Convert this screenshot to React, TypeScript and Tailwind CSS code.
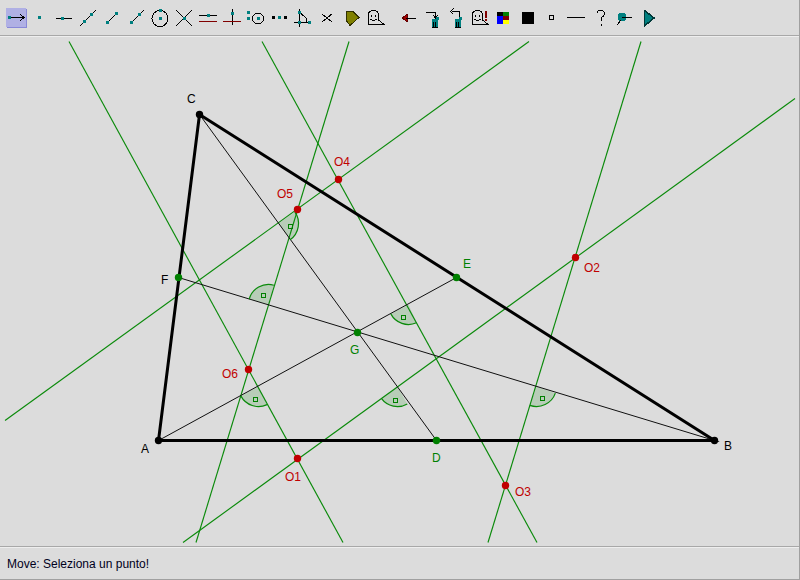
import React from "react";

const T = "#008080";
const Sq = ({ x, y, s = 3, c = T }: { x: number; y: number; s?: number; c?: string }) => (
  <rect x={x} y={y} width={s} height={s} fill={c} />
);
const L = ({ d, c = "#000", w = 1 }: { d: string; c?: string; w?: number }) => (
  <path d={d} stroke={c} strokeWidth={w} fill="none" />
);
const Can = ({ x, y }: { x: number; y: number }) => (
  <g>
    <rect x={x} y={y} width={6} height={8} fill={T} />
    <rect x={x + 4} y={y - 2} width={3} height={3} fill={T} />
    <rect x={x + 1} y={y + 3} width={1} height={5} fill="#000" />
    <rect x={x + 3} y={y + 3} width={1} height={5} fill="#000" />
    <rect x={x} y={y + 8} width={6} height={1} fill="#000" />
  </g>
);
const Ghost = () => (
  <g>
    <path d="M4.5 18.5V9Q4.5 4.5 9 4.5H10Q14.5 4.5 14.5 9V14L20 18.5Z" fill="none" stroke="#000" />
    <rect x={7} y={9} width={1} height={2} fill="#000" />
    <rect x={11} y={9} width={1} height={2} fill="#000" />
    <path d="M6.5 13Q9.5 16 12.5 13" fill="none" stroke="#000" />
  </g>
);

const icons: React.ReactNode[] = [
  <g key="0">
    <rect x={3} y={3} width={20} height={19} fill="#8888d8" />
    <rect x={2} y={2} width={20} height={19} fill="#b0b0e4" />
    <Sq x={4} y={10} />
    <L d="M7 11.5H20M16 8L20 11.5L16 15" />
  </g>,
  <g key="1"><Sq x={10} y={10} /></g>,
  <g key="2"><L d="M4 12.5H20" /><Sq x={9} y={11} /></g>,
  <g key="3"><L d="M4 20L20 4" /><Sq x={7} y={14} /><Sq x={14} y={7} /></g>,
  <g key="4"><L d="M7 17L17 7" /><Sq x={6} y={15} /><Sq x={15} y={6} /></g>,
  <g key="5"><L d="M7 17L20 4" /><Sq x={6} y={15} /><Sq x={14} y={7} /></g>,
  <g key="6"><circle cx={12} cy={12.5} r={8} fill="none" stroke="#000" /><Sq x={11} y={11} /><Sq x={11} y={3} /></g>,
  <g key="7"><L d="M4 4L20 20M20 4L4 20" /><Sq x={10.5} y={10.5} /></g>,
  <g key="8"><L d="M3 9.5H21" /><L d="M3 15.5H21" c="#800000" /><Sq x={10.5} y={8} /></g>,
  <g key="9"><L d="M12.5 3V19" /><L d="M3 15.5H21" c="#800000" /><Sq x={11} y={6} /></g>,
  <g key="10"><Sq x={3} y={5} /><Sq x={3} y={11} /><circle cx={14} cy={12.5} r={5.5} fill="none" stroke="#000" /><Sq x={13} y={11} /></g>,
  <g key="11"><Sq x={4} y={10} c="#000" /><Sq x={10} y={10} /><Sq x={16} y={10} c="#000" /></g>,
  <g key="12">
    <L d="M7.5 3V21M2 16.5H17" />
    <path d="M8 7L12 10Q15 12 15 16" fill="none" stroke="#000" />
    <Sq x={6} y={5} /><Sq x={6} y={15} /><Sq x={16} y={15} />
  </g>,
  <g key="13"><L d="M6 8Q10 11 11 12Q12 11 16 8M6 16Q10 13 11 12Q12 13 16 16" /></g>,
  <g key="14"><path d="M6.5 5.5H13L19 11.5L10 19.5L6.5 15Z" fill="#808000" stroke="#303000" /></g>,
  <g key="15"><Ghost /></g>,
  <g key="16"><path d="M6 12L11 8.5V15.5Z" fill="#a00000" stroke="#600000" /><L d="M10 12.5H20" /></g>,
  <g key="17"><L d="M6 6.5H15.5V11" /><L d="M13 9L15.5 12L18 9" /><Can x={12} y={13} /></g>,
  <g key="18"><L d="M8 5.5H15.5V11" /><L d="M9.5 2.5L6.5 5.5L9.5 8.5" /><Can x={11} y={13} /></g>,
  <g key="19"><Ghost /><rect x={17} y={5} width={2} height={7} fill="#800000" /><rect x={17} y={13} width={2} height={2} fill="#800000" /></g>,
  <g key="20">
    <rect x={5} y={6} width={6} height={4} fill="#000" /><rect x={11} y={6} width={6} height={4} fill="#008000" />
    <rect x={5} y={10} width={6} height={4} fill="#0000ff" /><rect x={11} y={10} width={6} height={4} fill="#800000" />
    <rect x={5} y={14} width={6} height={4} fill="#0000ff" /><rect x={11} y={14} width={6} height={4} fill="#ffff00" />
  </g>,
  <g key="21"><rect x={6} y={6} width={12} height={12} fill="#000" /></g>,
  <g key="22"><rect x={9.5} y={9.5} width={4} height={4} fill="none" stroke="#000" /></g>,
  <g key="23"><L d="M3 11.5H21" /></g>,
  <g key="24"><path d="M9 7Q9 4.5 13 4.5Q16.5 4.5 16.5 7.5Q16.5 10 13.5 11.5Q13 12 13 15" fill="none" stroke="#000" /><rect x={13} y={18} width={1} height={2} fill="#000" /></g>,
  <g key="25"><circle cx={10} cy={11} r={4.5} fill={T} /><L d="M10 11.5H20M5 19L9 14" /></g>,
  <g key="26"><path d="M8.5 4.5L18 12L8.5 20Z" fill={T} stroke="#003838" strokeWidth={1.5} /></g>,
];

const green = "#0a8a0a";
const greenLines: [number, number, number, number][] = [
  [68.5, 41, 342.5, 542],
  [261.5, 41, 536.5, 542],
  [348.5, 41, 195.5, 542],
  [640.5, 41, 487.5, 542],
  [528.5, 41, 4.5, 420],
  [794.5, 98, 182.5, 542],
];

// vertex, first end, second end, right-angle marker
const sectors: number[][] = [
  [278, 223, 295, 211, 288, 237, 290, 226],
  [268, 304, 250, 299, 273, 286, 263, 295],
  [408, 304, 391, 313, 415, 320, 403, 317],
  [397, 386, 382, 397, 406, 402, 395, 400],
  [536, 386, 530, 403, 553, 392, 542, 398],
  [258, 386, 241, 395, 266, 403, 255, 399],
];
const R = 20;
function sector([vx, vy, ax, ay, bx, by]: number[]) {
  const ua = Math.hypot(ax - vx, ay - vy);
  const ub = Math.hypot(bx - vx, by - vy);
  const px = vx + ((ax - vx) / ua) * R;
  const py = vy + ((ay - vy) / ua) * R;
  const qx = vx + ((bx - vx) / ub) * R;
  const qy = vy + ((by - vy) / ub) * R;
  const sweep = (ax - vx) * (by - vy) - (ay - vy) * (bx - vx) > 0 ? 1 : 0;
  const arc = `M${px} ${py}A${R} ${R} 0 0 ${sweep} ${qx} ${qy}`;
  return { arc, fill: `M${vx} ${vy}L${px} ${py}A${R} ${R} 0 0 ${sweep} ${qx} ${qy}Z` };
}

const pts: [number, number, string][] = [
  [158, 440, "#000"], [714, 440, "#000"], [199, 114, "#000"],
  [436, 440, "#008000"], [456, 277, "#008000"], [178, 277, "#008000"], [357, 332, "#008000"],
  [297, 458, "#c00000"], [575, 257, "#c00000"], [505, 485, "#c00000"],
  [338, 179, "#c00000"], [297, 209, "#c00000"], [248, 369, "#c00000"],
];
const labels: [string, number, number, string][] = [
  ["C", 186.5, 102, "#000"], ["A", 140.5, 452, "#000"], ["B", 723.5, 449, "#000"],
  ["D", 431.5, 461, "#008000"], ["E", 462.5, 267, "#008000"], ["F", 160.5, 283, "#000"], ["G", 349.5, 353, "#008000"],
  ["O1", 284.5, 480, "#c00000"], ["O2", 583.5, 271, "#c00000"], ["O3", 514.5, 495, "#c00000"],
  ["O4", 333.5, 165, "#c00000"], ["O5", 276.5, 197, "#c00000"], ["O6", 221.5, 377, "#c00000"],
];

export default function App() {
  return (
    <div className="w-[800px] h-[580px] flex flex-col bg-[#dcdcdc] border-r border-[#a0a0a0] overflow-hidden font-['Liberation_Sans',Arial,sans-serif]">
      <div className="h-[37px] shrink-0 border-b border-[#eeeeee]">
        <div className="h-[36px] flex pl-1 pt-[6px] border-b border-[#a8a8a8]">
          {icons.map((ic, i) => (
            <svg key={i} width={24} height={24} viewBox="0 0 24 24" shapeRendering="crispEdges" className={i === 16 ? "ml-2 shrink-0" : "shrink-0"}>
              {ic}
            </svg>
          ))}
        </div>
      </div>
      <svg viewBox="-0.5 36.5 799 509" className="w-[799px] h-[509px] shrink-0 block">
        {sectors.map((s, i) => {
          const g = sector(s);
          return <path key={i} d={g.fill} fill="#008000" fillOpacity={0.16} />;
        })}
        {greenLines.map(([a, b, c, d], i) => (
          <line key={i} x1={a} y1={b} x2={c} y2={d} stroke={green} strokeWidth={1.15} />
        ))}
        <g stroke="#101010" strokeWidth={1}>
          <line x1={199} y1={114} x2={436} y2={440} />
          <line x1={158} y1={440} x2={456} y2={277} />
          <line x1={178} y1={277} x2={714} y2={440} />
        </g>
        <polygon points="158,440 714,440 199,114" fill="none" stroke="#000" strokeWidth={3} />
        {sectors.map((s, i) => {
          const g = sector(s);
          return (
            <g key={i}>
              <path d={g.arc} fill="none" stroke={green} strokeWidth={1.2} />
              <rect x={s[6] - 2} y={s[7] - 2} width={4} height={4} fill="none" stroke="#008000" strokeWidth={1} shapeRendering="crispEdges" />
            </g>
          );
        })}
        {pts.map(([x, y, c], i) => (
          <circle key={i} cx={x} cy={y} r={3.7} fill={c} />
        ))}
        {labels.map(([t, x, y, c]) => (
          <text key={t} x={x} y={y} fill={c} fontSize={12} fontFamily="'Liberation Sans', Arial, sans-serif">{t}</text>
        ))}
      </svg>
      <div className="flex-1 border-t border-t-[#a8a8a8] border-b border-b-[#a0a0a0]">
        <div className="h-full border-t border-t-[#eeeeee] pl-[7px] pt-[9px] text-xs leading-[14px] text-[#000020]">
          Move: Seleziona un punto!
        </div>
      </div>
    </div>
  );
}
